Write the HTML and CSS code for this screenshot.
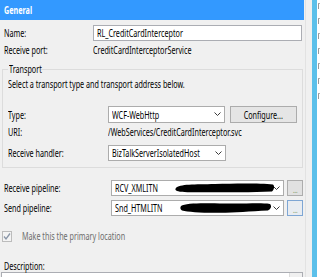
FILE: index.html
```html
<!DOCTYPE html>
<html>
<head>
<meta charset="utf-8">
<link rel="stylesheet" href="styles.css">
</head>
<body>
<div class="window">
  <div class="panel">
    <div class="header"><span class="sx">General</span></div>

    <div class="row r-name">
      <div class="lbl"><span class="sx">Name:</span></div>
      <div class="textbox w-name"><span class="sx">RL_CreditCardInterceptor</span></div>
    </div>

    <div class="row r-port">
      <div class="lbl"><span class="sx">Receive port:</span></div>
      <div class="val"><span class="sx">CreditCardInterceptorService</span></div>
    </div>

    <div class="group">
      <div class="legend"><span class="sx">Transport</span></div>
      <div class="row g-desc"><span class="sx">Select a transport type and transport address below.</span></div>

      <div class="row g-type">
        <div class="glbl"><span class="sx">Type:</span></div>
        <div class="combo w-type">
          <div class="ctext"><span class="sx">WCF-WebHttp</span></div>
          <svg class="chev" width="7" height="5" viewBox="0 0 7 5"><polyline points="0.5,0.5 3.5,3.5 6.5,0.5" fill="none" stroke="#3a3a3a" stroke-width="1"/></svg>
        </div>
        <div class="button w-conf"><span class="sx c">Configure...</span></div>
      </div>

      <div class="row g-uri">
        <div class="glbl"><span class="sx">URI:</span></div>
        <div class="val"><span class="sx">/WebServices/CreditCardInterceptor.svc</span></div>
      </div>

      <div class="row g-handler">
        <div class="glbl"><span class="sx">Receive handler:</span></div>
        <div class="combo w-handler">
          <div class="ctext"><span class="sx">BizTalkServerIsolatedHost</span></div>
          <svg class="chev" width="7" height="5" viewBox="0 0 7 5"><polyline points="0.5,0.5 3.5,3.5 6.5,0.5" fill="none" stroke="#3a3a3a" stroke-width="1"/></svg>
        </div>
      </div>
    </div>

    <div class="row p-recv">
      <div class="plbl"><span class="sx">Receive pipeline:</span></div>
      <div class="combo w-pipe">
        <div class="ctext"><span class="sx">RCV_XMLITN</span></div>
        <svg class="chev" width="7" height="5" viewBox="0 0 7 5"><polyline points="0.5,0.5 3.5,3.5 6.5,0.5" fill="none" stroke="#3a3a3a" stroke-width="1"/></svg>
        <svg class="scribble s1" width="100" height="12" viewBox="0 0 100 12"><path d="M1,6 C4,2 20,2.5 40,2 C60,1.5 85,1.2 98,2.5 C100,4 99,8 97,9.5 C80,10.5 60,10 40,10.2 C20,10.5 6,10.5 2,9 C0,8 0,7 1,6 Z" fill="#000"/></svg>
      </div>
      <div class="dots"><span class="sx c">...</span></div>
    </div>

    <div class="row p-send">
      <div class="plbl"><span class="sx">Send pipeline:</span></div>
      <div class="combo w-pipe">
        <div class="ctext"><span class="sx">Snd_HTMLITN</span></div>
        <svg class="chev" width="7" height="5" viewBox="0 0 7 5"><polyline points="0.5,0.5 3.5,3.5 6.5,0.5" fill="none" stroke="#3a3a3a" stroke-width="1"/></svg>
        <svg class="scribble s2" width="92" height="13" viewBox="0 0 92 13"><path d="M1,5 C6,1.5 25,2 45,2.5 C65,3 80,1.5 90,3 C92,5 91,8 88,9.5 C70,10.5 55,11.5 40,11.8 C22,12 8,11 2,9.5 C0,8 0,6.5 1,5 Z" fill="#000"/></svg>
      </div>
      <div class="dots focus"><span class="sx c">...</span></div>
    </div>

    <div class="row chk-row">
      <svg class="chk" width="10" height="11" viewBox="0 0 10 11"><rect x="0.5" y="0.5" width="9" height="10" fill="#f4f4f4" stroke="#bcbcbc"/><polyline points="2,5.5 4,8 8,2.5" fill="none" stroke="#8a96a8" stroke-width="1.3"/></svg>
      <span class="chk-text"><span class="sx">Make this the primary location</span></span>
    </div>

    <div class="row d-lbl"><span class="sx desc">Description:</span></div>
    <div class="descbox"><div class="sb"></div></div>
  </div>
  <div class="divider"></div>
  <div class="gap"></div>
  <div class="strip"></div>
  <div class="side">
    <div class="mark"></div><div class="mark"></div><div class="mark"></div><div class="mark"></div><div class="mark"></div><div class="mark"></div><div class="mark"></div>
  </div>
</div>
</body>
</html>
```

FILE: styles.css
```css
* { box-sizing: border-box; }
html, body { margin: 0; padding: 0; }
body {
  background: #f0f0f0;
  font-family: "Noto Sans", "Liberation Sans", sans-serif;
  font-size: 10px;
  color: #000;
}
.window { display: flex; width: 320px; height: 277px; overflow: hidden; }
.panel { width: 305px; flex: none; }
.divider { width: 1px; flex: none; background: #e2e2e2; }
.gap { width: 6px; flex: none; }
.strip { width: 5px; flex: none; background: #5cc0ea; }
.side {
  flex: 1; background: #fff; overflow: hidden;
  padding-top: 3px;
}
.side .mark {
  width: 3px; height: 6px;
  margin: 0 0 9px 1px;
  border-left: 1px solid #9a9a9a;
  border-top: 1px solid #b4b4b4;
}

.sx {
  display: inline-block;
  white-space: nowrap;
  transform: scaleX(0.72);
  transform-origin: 0 50%;
}
.sx.c { transform-origin: 50% 50%; }

.header {
  height: 20px;
  margin-right: 1px;
  background: #3399ff;
  color: #fff;
  font-weight: bold;
  padding-left: 4px;
  line-height: 20px;
}
.row { display: flex; align-items: center; }
.lbl { width: 93px; padding-left: 4px; flex: none; }
.val { flex: none; }

.textbox {
  height: 16px;
  border: 1px solid #abadb3;
  background: #fff;
  padding-left: 3px;
  display: flex;
  align-items: center;
  flex: none;
}
.r-name { margin-top: 5px; height: 16px; }
.w-name { width: 209px; }
.r-port { margin-top: 1px; height: 16px; }

.group {
  margin: 11px 0 0 2px;
  width: 301px;
  height: 99px;
  border: 1px solid #dcdcdc;
  padding-left: 5px;
}
.legend {
  width: 33px;
  height: 12px;
  line-height: 12px;
  margin-top: -7px;
  padding: 0 1px;
  background: #f0f0f0;
}
.g-desc { margin-top: 2px; height: 14px; }
.g-type { margin-top: 15px; height: 17px; }
.glbl { width: 100px; flex: none; }
.combo {
  position: relative;
  display: flex;
  align-items: center;
  height: 100%;
  border: 1px solid #acacac;
  background: #fff;
  padding: 0 3px 0 3px;
  flex: none;
}
.ctext { flex: 1; min-width: 0; overflow: hidden; }
.chev { flex: none; margin-left: 2px; }
.w-type { width: 117px; }
.button {
  height: 100%;
  border: 1px solid #acacac;
  background: #e5e5e5;
  display: flex;
  align-items: center;
  justify-content: center;
  flex: none;
}
.w-conf { width: 67px; margin-left: 5px; }
.g-uri { margin-top: 2px; height: 14px; }
.g-handler { margin-top: 6px; height: 16px; }
.w-handler { width: 118px; }

.p-recv { margin-top: 12px; height: 16px; }
.p-send { margin-top: 4px; height: 16px; }
.plbl { width: 111px; padding-left: 4px; flex: none; }
.w-pipe { width: 173px; }
.scribble { position: absolute; }
.s1 { left: 63px; top: 1px; }
.s2 { left: 68px; top: 0px; }
.dots {
  width: 16px; height: 100%;
  margin-left: 3px;
  border: 1px solid #adadad;
  background: #e1e1e1;
  display: flex; align-items: flex-end; justify-content: center;
  font-size: 8px; color: #6a8a4a; line-height: 10px;
  flex: none;
}
.dots.focus { border-color: #7ea6d4; background: #e8ecf1; }

.chk-row { margin-top: 14px; height: 12px; }
.chk { margin-left: 2px; flex: none; }
.chk-text { margin-left: 10px; color: #6d6d6d; }
.d-lbl { margin-top: 17px; height: 13px; padding-left: 4px; }
.descbox {
  margin-left: 1px;
  width: 302px;
  height: 20px;
  border: 1px solid #abadb3;
  background: #fff;
  display: flex;
  justify-content: flex-end;
}
.sb { width: 13px; height: 6px; border-left: 1px solid #dcdcdc; border-bottom: 1px solid #dcdcdc; background: #f0f0f0; }
```
